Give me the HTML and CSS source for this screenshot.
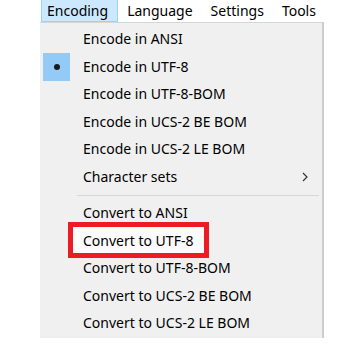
FILE: index.html
```html
<!DOCTYPE html>
<html>
<head>
<meta charset="utf-8">
<link rel="stylesheet" href="styles.css">
</head>
<body>
<div class="menubar">
  <div class="mb-item active">Encoding</div>
  <div class="mb-item">Language</div>
  <div class="mb-item">Settings</div>
  <div class="mb-item">Tools</div>
</div>
<div class="dropdown">
  <div class="row"><span class="gutter"></span><span class="label">Encode in ANSI</span></div>
  <div class="row"><span class="gutter checked"><span class="dot"></span></span><span class="label">Encode in UTF-8</span></div>
  <div class="row"><span class="gutter"></span><span class="label">Encode in UTF-8-BOM</span></div>
  <div class="row"><span class="gutter"></span><span class="label">Encode in UCS-2 BE BOM</span></div>
  <div class="row"><span class="gutter"></span><span class="label">Encode in UCS-2 LE BOM</span></div>
  <div class="row"><span class="gutter"></span><span class="label">Character sets</span>
    <svg class="chev" width="6" height="10" viewBox="0 0 6 10"><path d="M1 1 L5 5 L1 9" fill="none" stroke="#333" stroke-width="1.2"/></svg>
  </div>
  <div class="sep"><div class="sep-line"></div></div>
  <div class="row"><span class="gutter"></span><span class="label">Convert to ANSI</span></div>
  <div class="row marked"><span class="gutter"></span><span class="label">Convert to UTF-8</span><span class="redbox"></span></div>
  <div class="row"><span class="gutter"></span><span class="label">Convert to UTF-8-BOM</span></div>
  <div class="row"><span class="gutter"></span><span class="label">Convert to UCS-2 BE BOM</span></div>
  <div class="row"><span class="gutter"></span><span class="label">Convert to UCS-2 LE BOM</span></div>
</div>
</body>
</html>
```
FILE: styles.css
```css
html, body {
  margin: 0;
  padding: 0;
  background: #ffffff;
}
body {
  font-family: "Noto Sans", "Open Sans", sans-serif;
  font-size: 14px;
  color: #000;
  width: 344px;
  height: 354px;
  overflow: hidden;
}
.menubar {
  display: flex;
  height: 22px;
  padding-left: 41px;
  box-sizing: border-box;
}
.mb-item {
  display: flex;
  align-items: center;
  padding: 0 9px;
  height: 22px;
  box-sizing: border-box;
  line-height: 1;
}
.mb-item.active {
  background: #cce8ff;
  border: 1px solid #99d1ff;
  border-top: none;
  padding: 0 9px 0 5px;
}
.dropdown {
  margin-left: 40px;
  width: 284px;
  height: 316px;
  box-sizing: border-box;
  background: #f0f0f0;
  border-top: 1px solid #d6d6d6;
  border-right: 2px solid #cdcdcd;
  padding-top: 2.5px;
}
.row {
  position: relative;
  display: flex;
  align-items: center;
  height: 27.5px;
}
.gutter {
  width: 27px;
  height: 100%;
  margin-left: 3px;
  margin-right: 13px;
  display: flex;
  align-items: center;
  justify-content: center;
  flex: none;
}
.gutter.checked {
  background: #93caf6;
}
.dot {
  width: 6px;
  height: 6px;
  border-radius: 50%;
  background: #1a1a1a;
}
.label {
  white-space: nowrap;
  line-height: 1;
}
.chev {
  position: absolute;
  left: 262px;
  top: 9px;
}
.sep {
  height: 9px;
  display: flex;
  align-items: center;
  padding-left: 37px;
  padding-right: 3px;
}
.sep-line {
  flex: 1;
  height: 1px;
  background: #d7d7d7;
}
.redbox {
  position: absolute;
  left: 28px;
  top: -5px;
  width: 141px;
  height: 36px;
  box-sizing: border-box;
  border: 5px solid #ed1c24;
}
.row.marked {
  z-index: 1;
}
.row.marked::before {
  content: "";
  position: absolute;
  left: 33px;
  top: 0;
  width: 131px;
  height: 26px;
  background: #fbfbfb;
  z-index: -1;
}
```
